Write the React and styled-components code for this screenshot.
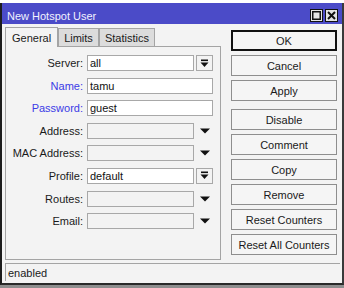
import React from 'react'
import styled, { createGlobalStyle, css } from 'styled-components'

const Global = createGlobalStyle`
  html, body {
    margin: 0;
    padding: 0;
  }
  body {
    font-family: "Liberation Sans", Arial, sans-serif;
    font-size: 11px;
    color: #1a1a1a;
  }
`

const Desktop = styled.div`
  width: 344px;
  height: 288px;
  padding-top: 3px;
  box-sizing: border-box;
  background: linear-gradient(to bottom, #ffffff 0 280px, #8e8e8e 280px);
  overflow: hidden;
`

const Window = styled.div`
  width: 344px;
  height: 282px;
  box-sizing: border-box;
  display: flex;
  flex-direction: column;
  background: #f3f3f3;
  border-left: 2px solid #1c1c1c;
  border-right: 2px solid #3a3a3a;
  border-bottom: 2px solid #2a2a2a;
`

const TitleBar = styled.div`
  height: 21px;
  box-sizing: border-box;
  padding: 3px 4px 0 5px;
  display: flex;
  align-items: center;
  background: #4b4bc8;
  color: #f2f2ff;
`

const Title = styled.div`
  flex: 1;
  padding-top: 1px;
`

const TitleButton = styled.div`
  width: 13px;
  height: 13px;
  box-sizing: border-box;
  margin-left: 2px;
  border: 1px solid #111;
  background: #e4e4e4;
  display: flex;
  align-items: center;
  justify-content: center;
`

const Body = styled.div`
  display: flex;
  padding: 3px 0 0 3px;
`

const Left = styled.div`
  display: flex;
  flex-direction: column;
  width: 216px;
`

const Tabs = styled.div`
  display: flex;
  height: 19px;
  align-items: flex-end;
`

const Tab = styled.div`
  height: 18px;
  box-sizing: border-box;
  padding: 0 5px;
  display: flex;
  align-items: center;
  border: 1px solid #a4a4a4;
  border-bottom: none;
  background: #dcdcdc;

  ${({ active }) =>
    active &&
    css`
      padding: 0 6px;
      background: #f3f3f3;
      position: relative;
      margin-bottom: -1px;
      height: 20px;
      z-index: 1;
    `}
`

const Panel = styled.div`
  height: 214px;
  box-sizing: border-box;
  border: 1px solid #a4a4a4;
  padding: 8px 0 0 0;
  display: grid;
  grid-template-columns: 77px 126px;
  column-gap: 4px;
  grid-auto-rows: 16px;
  row-gap: 6.6px;
  align-items: center;
`

const Label = styled.div`
  text-align: right;
  color: ${({ accent }) => (accent ? '#3b3be6' : '#1a1a1a')};
`

const Field = styled.div`
  display: flex;
  height: 16px;
  gap: 2px;
`

const Input = styled.div`
  box-sizing: border-box;
  height: 16px;
  flex: ${({ wide }) => (wide ? '1' : 'none')};
  width: ${({ wide }) => (wide ? 'auto' : '107px')};
  border: 1px solid #a8a8a8;
  background: ${({ disabled }) => (disabled ? '#f3f3f3' : '#ffffff')};
  padding-left: 2px;
  display: flex;
  align-items: center;
  color: #111;
`

const ComboButton = styled.div`
  width: 17px;
  height: 16px;
  box-sizing: border-box;
  border: 1px solid #a8a8a8;
  background: #f3f3f3;
  display: flex;
  align-items: center;
  justify-content: center;
`

const Arrow = styled.div`
  width: 17px;
  display: flex;
  align-items: center;
  justify-content: center;
`

const Buttons = styled.div`
  display: flex;
  flex-direction: column;
  width: 106px;
  margin: 3px 0 0 10px;
  gap: 4px;
`

const Button = styled.div`
  height: 21px;
  box-sizing: border-box;
  border: 1px solid #8e8e8e;
  background: #f5f5f5;
  display: flex;
  align-items: center;
  justify-content: center;
  color: #1a1a1a;

  ${({ primary }) =>
    primary &&
    css`
      border: 2px solid #111;
    `}

  ${({ spaced }) =>
    spaced &&
    css`
      margin-top: 4px;
    `}
`

const StatusBar = styled.div`
  height: 18px;
  box-sizing: border-box;
  margin: 3px 2px 0 3px;
  border-top: 1px solid #a4a4a4;
  border-left: 1px solid #a4a4a4;
  padding-left: 2px;
  display: flex;
  align-items: center;
`

const DropIcon = () => (
  <svg width="9" height="9" viewBox="0 0 9 9">
    <rect x="1" y="0.5" width="7" height="1.6" fill="#111" />
    <path d="M0.5 3.5 H8.5 L4.5 8 Z" fill="#111" />
  </svg>
)

const TriangleIcon = () => (
  <svg width="10" height="6" viewBox="0 0 10 6">
    <path d="M0 0.5 H10 L5 5.5 Z" fill="#111" />
  </svg>
)

const rows = [
  { label: 'Server', value: 'all', kind: 'combo' },
  { label: 'Name', value: 'tamu', kind: 'text', accent: true },
  { label: 'Password', value: 'guest', kind: 'text', accent: true },
  { label: 'Address', kind: 'arrow' },
  { label: 'MAC Address', kind: 'arrow' },
  { label: 'Profile', value: 'default', kind: 'combo' },
  { label: 'Routes', kind: 'arrow' },
  { label: 'Email', kind: 'arrow' }
]

const actions = [
  { text: 'OK', primary: true },
  { text: 'Cancel' },
  { text: 'Apply' },
  { text: 'Disable', spaced: true },
  { text: 'Comment' },
  { text: 'Copy' },
  { text: 'Remove' },
  { text: 'Reset Counters' },
  { text: 'Reset All Counters' }
]

const Row = ({ row }) => (
  <>
    <Label accent={row.accent}>{row.label}:</Label>
    <Field>
      {row.kind === 'text' && <Input wide>{row.value}</Input>}
      {row.kind === 'combo' && (
        <>
          <Input>{row.value}</Input>
          <ComboButton>
            <DropIcon />
          </ComboButton>
        </>
      )}
      {row.kind === 'arrow' && (
        <>
          <Input disabled />
          <Arrow>
            <TriangleIcon />
          </Arrow>
        </>
      )}
    </Field>
  </>
)

export default function App() {
  return (
    <Desktop>
      <Global />
      <Window>
        <TitleBar>
          <Title>New Hotspot User</Title>
          <TitleButton>
            <svg width="9" height="9" viewBox="0 0 9 9">
              <rect x="0.75" y="0.75" width="7.5" height="7.5" fill="none" stroke="#111" strokeWidth="1.5" />
            </svg>
          </TitleButton>
          <TitleButton>
            <svg width="9" height="9" viewBox="0 0 9 9">
              <path d="M1 1 L8 8 M8 1 L1 8" stroke="#111" strokeWidth="2" />
            </svg>
          </TitleButton>
        </TitleBar>

        <Body>
          <Left>
            <Tabs>
              <Tab active>General</Tab>
              <Tab>Limits</Tab>
              <Tab>Statistics</Tab>
            </Tabs>
            <Panel>
              {rows.map((row) => (
                <Row key={row.label} row={row} />
              ))}
            </Panel>
          </Left>

          <Buttons>
            {actions.map((a) => (
              <Button key={a.text} primary={a.primary} spaced={a.spaced}>
                {a.text}
              </Button>
            ))}
          </Buttons>
        </Body>

        <StatusBar>enabled</StatusBar>
      </Window>
    </Desktop>
  )
}
